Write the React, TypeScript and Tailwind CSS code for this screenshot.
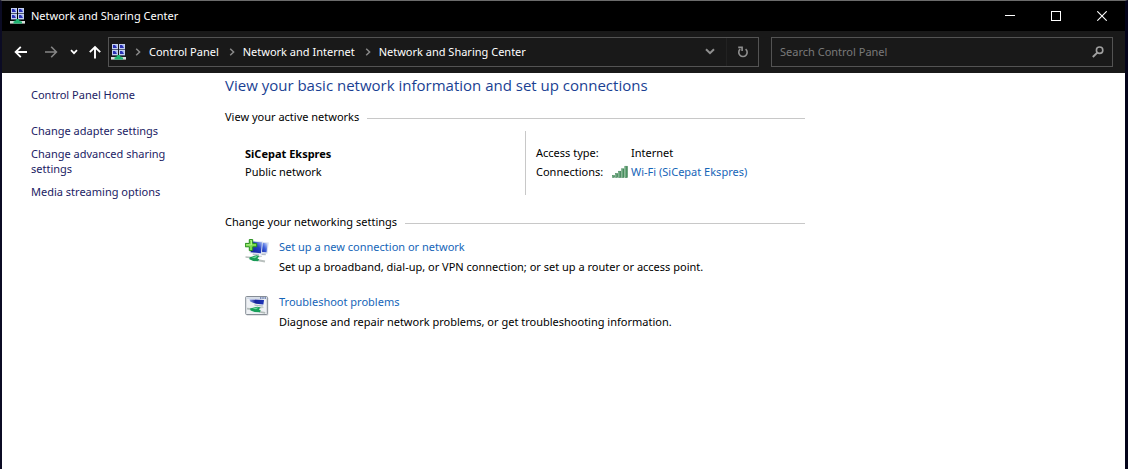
import type { ReactNode } from "react";

function NetworkIcon() {
  const screens = [
    [1, 0],
    [8, 0],
    [1, 6],
    [8, 6],
  ];
  return (
    <svg viewBox="0 0 16 16" className="h-4 w-4 shrink-0" aria-hidden="true">
      {screens.map(([x, y]) => (
        <g key={`${x}-${y}`}>
          <rect x={x} y={y} width="6" height="5" fill="#c3cfee" />
          <rect x={x + 1} y={y + 1} width="4" height="3" fill="#2a30b4" />
          <path d={`M${x + 3} ${y + 1}h2v3z`} fill="#9db0f2" />
          <rect x={x} y={y + 5} width="6" height="1" fill="#4d5673" />
        </g>
      ))}
      <rect x="0" y="13" width="15" height="2.6" fill="#d9dedb" />
      <path d="M6 11h3v1.5h1.5v1H12v2.1H3.5v-2.1h1v-1H6z" fill="#1fb573" />
    </svg>
  );
}

function SignalIcon() {
  return (
    <svg viewBox="0 0 16 14" className="h-[14px] w-4 shrink-0" aria-hidden="true">
      <defs>
        <linearGradient id="bars" x1="0" y1="0" x2="1" y2="0">
          <stop offset="0" stopColor="#8cc79a" />
          <stop offset="1" stopColor="#2c7446" />
        </linearGradient>
      </defs>
      <g fill="url(#bars)" stroke="#3c7f52" strokeWidth="0.5">
        <rect x="0.4" y="10.5" width="2.2" height="2" />
        <rect x="3.5" y="8.5" width="2.2" height="4" />
        <rect x="6.6" y="6.2" width="2.2" height="6.4" />
        <rect x="9.7" y="3.8" width="2.2" height="8.8" />
        <rect x="12.8" y="1.2" width="2.6" height="11.5" />
      </g>
    </svg>
  );
}

function NewConnectionIcon() {
  return (
    <svg viewBox="0 0 24 24" className="h-6 w-6 shrink-0" aria-hidden="true">
      <defs>
        <linearGradient id="screenLeft" x1="0" y1="1" x2="1" y2="0">
          <stop offset="0" stopColor="#0d1d96" />
          <stop offset="0.6" stopColor="#2640c4" />
          <stop offset="1" stopColor="#9db8f4" />
        </linearGradient>
        <linearGradient id="screenRight" x1="0" y1="1" x2="1" y2="0">
          <stop offset="0" stopColor="#1427a8" />
          <stop offset="0.5" stopColor="#3f62dc" />
          <stop offset="1" stopColor="#dbe6fd" />
        </linearGradient>
      </defs>
      <path d="M13 2.8l10.8.6-1.4 11.4-8.4-.6z" fill="#d7deec" />
      <path d="M16.5 3.8l6.2.4-1.2 9-5.5-.4z" fill="url(#screenRight)" />
      <path d="M16.5 14.4l4.4.2-.2 1.6-4.4-.3z" fill="#b4bcca" />
      <path d="M5 1.8l13 .6-1.3 13-12.2-1.2z" fill="#dde4f1" />
      <path d="M6 2.6l11 .6-1.1 11-10.2-1z" fill="url(#screenLeft)" />
      <path d="M8 14.6l6 .6.2 1.5-6.6-.6z" fill="#b4bcca" />
      <path d="M0.5 17.2l6 .6-.4 1.8-5.6-.8zM13.2 20.2l7 1.3-.4 2.1-6.8-1.4z" fill="#b9c0be" />
      <path d="M12 17.2l4.6-.6.6 1.2-4.4 1z" fill="#cdd3d1" />
      <path d="M4.4 18.4l7-2.2 3 .8-2 2.2 1.8 1.2-1.2 1.9-4.8-.3-3.8-1.7z" fill="#179a55" />
      <path d="M6.6 18.6l4.6-1.5 1.2.4-2.4 1.7z" fill="#72dd9f" />
      <path
        d="M4.3 0.6h3.4v3.8h4v3.4h-4v3.8H4.3V7.8h-4V4.4h4z"
        fill="#7ddd50"
        stroke="#258c1c"
        strokeWidth="1"
      />
      <path d="M5.3 1.6h1.2v4.2H1.4" fill="none" stroke="#c4f5a2" strokeWidth="0.8" />
    </svg>
  );
}

function TroubleshootIcon() {
  return (
    <svg viewBox="0 0 24 24" className="h-6 w-6 shrink-0" aria-hidden="true">
      <defs>
        <linearGradient id="cableBlue" x1="0" y1="0" x2="1" y2="0">
          <stop offset="0" stopColor="#8fa4ea" />
          <stop offset="0.4" stopColor="#16249c" />
          <stop offset="1" stopColor="#1d34b8" />
        </linearGradient>
      </defs>
      <rect x="1.3" y="3.3" width="22" height="18.2" rx="1" fill="#c7cbd0" />
      <rect x="0.7" y="2.5" width="21.6" height="18" rx="0.8" fill="#eef1f4" stroke="#868d95" />
      <path d="M1.3 3.2h20.4v1.8H1.3z" fill="#d3dbe6" />
      <path d="M15 4h1.4M17.3 4h1.4M19.6 4H21" stroke="#27408e" strokeWidth="1.1" />
      <path d="M4.4 5.4l14.6.6-.6 4.4-7.4-.6-5.6-2z" fill="url(#cableBlue)" />
      <path d="M9 10.6l9.2.8-.6 1.2-7.8-.8z" fill="#aab3c4" />
      <path d="M2 13.8l5 .4-.3 1.9-4.7-.5zM14.4 17l6 1-.4 1.7-6-1.2z" fill="#b3bcba" />
      <path d="M13.6 13.2l4.6-.7.5 1.2-4.4 1z" fill="#c6cdca" />
      <path d="M5 14.6l7.2-1.9 3.6.7-2 1.8 2 1.3-1 1.8-5.2-.2-4-1.6z" fill="#18a05a" />
      <path d="M7.4 14.6l4.8-1.2 1.2.4-2.4 1.4z" fill="#74dfa2" />
    </svg>
  );
}

function Crumb({ children }: { children: ReactNode }) {
  return (
    <li className="flex items-center">
      <svg viewBox="0 0 6 8" className="mx-2 h-2 w-[6px]" aria-hidden="true">
        <path d="M1.2 0.8L4.6 4 1.2 7.2" fill="none" stroke="#8a8a8a" strokeWidth="1.5" />
      </svg>
      <a href="#" className="pr-[2px] whitespace-nowrap text-white">
        {children}
      </a>
    </li>
  );
}

function TitleBar() {
  const button = "flex h-full w-[46px] items-center justify-center";
  return (
    <header className="flex h-[30px] items-center bg-black pl-2 text-white">
      <NetworkIcon />
      <span className="flex-1 pl-[5px]">Network and Sharing Center</span>
      <button aria-label="Minimize" className={button}>
        <svg viewBox="0 0 10 10" className="h-[10px] w-[10px]" shapeRendering="crispEdges">
          <path d="M0 4.5h10" stroke="white" />
        </svg>
      </button>
      <button aria-label="Maximize" className={button}>
        <svg viewBox="0 0 10 10" className="h-[10px] w-[10px]" shapeRendering="crispEdges">
          <rect x="0.5" y="0.5" width="9" height="9" fill="none" stroke="white" />
        </svg>
      </button>
      <button aria-label="Close" className={button}>
        <svg viewBox="0 0 10 10" className="h-[10px] w-[10px]">
          <path d="M0.3 0.3l9.4 9.4M9.7 0.3L0.3 9.7" stroke="white" strokeWidth="1.1" />
        </svg>
      </button>
    </header>
  );
}

function AddressBar() {
  return (
    <div className="flex h-[42px] items-center bg-[#191919] px-3 pb-px text-white">
      <button aria-label="Back">
        <svg viewBox="0 0 14 14" className="h-[14px] w-[14px]" fill="none" stroke="#fff" strokeWidth="1.8">
          <path d="M13 7H1.8M6.8 1.8L1.6 7l5.2 5.2" />
        </svg>
      </button>
      <button aria-label="Forward" className="ml-4">
        <svg viewBox="0 0 14 14" className="h-[14px] w-[14px]" fill="none" stroke="#858585" strokeWidth="1.6">
          <path d="M1 7h11.2M7.2 1.8L12.4 7l-5.2 5.2" />
        </svg>
      </button>
      <button aria-label="Recent locations" className="ml-3">
        <svg viewBox="0 0 8 6" className="h-[6px] w-2" fill="none" stroke="#fff" strokeWidth="1.7">
          <path d="M1 1.2l3 3 3-3" />
        </svg>
      </button>
      <button aria-label="Up" className="ml-[10px]">
        <svg viewBox="0 0 14 14" className="h-[14px] w-[14px]" fill="none" stroke="#fff" strokeWidth="1.9">
          <path d="M7 13.5V2.2M1.8 7.2L7 2l5.2 5.2" />
        </svg>
      </button>
      <nav
        aria-label="Address"
        className="ml-[6px] flex h-[30px] flex-1 items-center border border-[#535353] pl-[2px]"
      >
        <NetworkIcon />
        <ol className="flex flex-1 items-center">
          <Crumb>Control Panel</Crumb>
          <Crumb>Network and Internet</Crumb>
          <Crumb>Network and Sharing Center</Crumb>
        </ol>
        <button aria-label="Previous locations" className="flex h-full w-8 items-center justify-center">
          <svg viewBox="0 0 10 7" className="h-[7px] w-[10px]" fill="none" stroke="#8f8f8f" strokeWidth="2">
            <path d="M1 1.2l4 4 4-4" />
          </svg>
        </button>
        <button
          aria-label="Refresh"
          className="flex h-full w-8 items-center justify-center border-l border-[#222222]"
        >
          <svg viewBox="0 0 12 12" className="h-3 w-3" fill="none" stroke="#8f8f8f" strokeWidth="1.6">
            <path d="M3.2 3.2A4.2 4.2 0 1 0 8.6 3.1" />
            <path d="M1.2 1.4h3.9v3.7" />
          </svg>
        </button>
      </nav>
      <label className="ml-3 flex h-[30px] w-[342px] items-center border border-[#535353] pr-2 pl-2">
        <input
          type="text"
          aria-label="Search Control Panel"
          placeholder="Search Control Panel"
          className="min-w-0 flex-1 bg-transparent text-white outline-none placeholder:text-[#7a7a7a]"
        />
        <svg viewBox="0 0 12 12" className="h-3 w-3" fill="none" stroke="#a0a0a0" aria-hidden="true">
          <circle cx="7.6" cy="4.2" r="3.2" strokeWidth="1.6" />
          <path d="M5.3 6.6L0.8 11" strokeWidth="2" />
        </svg>
      </label>
    </div>
  );
}

function Sidebar() {
  return (
    <nav aria-label="Tasks" className="flex w-[194px] shrink-0 flex-col items-start pt-[14px] pr-12 pl-[29px] text-[#1b2264]">
      <a href="#" className="mb-[21px] leading-[15px]">Control Panel Home</a>
      <a href="#" className="mb-2 leading-[15px] whitespace-nowrap">Change adapter settings</a>
      <a href="#" className="mb-2 leading-[15px]">
        <span className="whitespace-nowrap">Change advanced sharing</span> settings
      </a>
      <a href="#" className="leading-[15px] whitespace-nowrap">Media streaming options</a>
    </nav>
  );
}

function SectionTitle({ children }: { children: ReactNode }) {
  return (
    <h2 className="flex items-center gap-2 leading-4 whitespace-nowrap">
      {children}
      <span className="mt-[2px] h-px flex-1 bg-[#c8c8c8]" />
    </h2>
  );
}

function Task({ icon, title, text }: { icon: ReactNode; title: string; text: string }) {
  return (
    <li className="flex gap-[10px] pl-5">
      {icon}
      <div className="flex flex-col gap-1">
        <a href="#" className="leading-4 text-[#1565b8]">{title}</a>
        <p className="leading-4 whitespace-nowrap">{text}</p>
      </div>
    </li>
  );
}

export default function App() {
  return (
    <div className="flex min-h-screen flex-col border-t border-r-[3px] border-l-2 border-t-[#6b6b6b] border-r-[#04041a] border-l-[#0b0b24] bg-white font-['Noto_Sans','Open_Sans',sans-serif] text-[11px] leading-4 text-black">
      <TitleBar />
      <AddressBar />
      <div className="flex flex-1">
        <Sidebar />
        <main className="ml-[29px] max-w-[580px] flex-1 pt-[2px]">
          <h1 className="font-['Open_Sans','Noto_Sans',sans-serif] text-[15px] leading-5 whitespace-nowrap text-[#1a3f93]">
            View your basic network information and set up connections
          </h1>
          <section className="mt-[14px]">
            <SectionTitle>View your active networks</SectionTitle>
            <div className="mt-[6px] flex h-16">
              <div className="w-[300px] pt-[15px] pl-5">
                <p className="mb-[2px] font-bold">SiCepat Ekspres</p>
                <p>Public network</p>
              </div>
              <dl className="grid flex-1 grid-cols-[95px_1fr] content-start gap-y-[3px] border-l border-[#c8c8c8] pt-[14px] pl-[10px]">
                <dt>Access type:</dt>
                <dd>Internet</dd>
                <dt className="flex items-center justify-between pr-[3px]">
                  Connections:
                  <SignalIcon />
                </dt>
                <dd>
                  <a href="#" className="text-[#1565b8]">Wi-Fi (SiCepat Ekspres)</a>
                </dd>
              </dl>
            </div>
          </section>
          <section className="mt-[19px]">
            <SectionTitle>Change your networking settings</SectionTitle>
            <ul className="mt-[9px] flex flex-col gap-[19px]">
              <Task
                icon={<NewConnectionIcon />}
                title="Set up a new connection or network"
                text="Set up a broadband, dial-up, or VPN connection; or set up a router or access point."
              />
              <Task
                icon={<TroubleshootIcon />}
                title="Troubleshoot problems"
                text="Diagnose and repair network problems, or get troubleshooting information."
              />
            </ul>
          </section>
        </main>
      </div>
    </div>
  );
}
